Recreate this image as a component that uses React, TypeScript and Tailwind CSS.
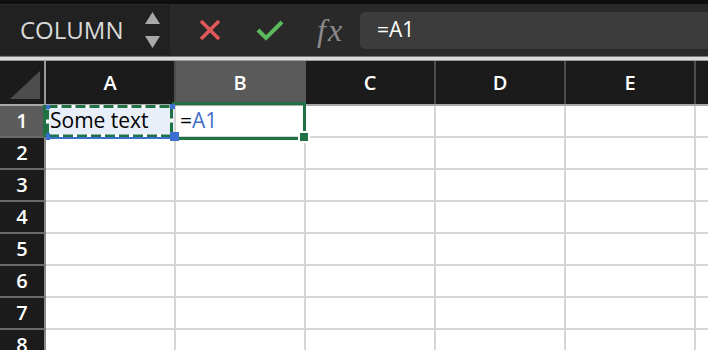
import React from 'react';

const COLS = ['A', 'B', 'C', 'D', 'E', 'F'];
const ROWS = [1, 2, 3, 4, 5, 6, 7, 8];

export default function App() {
  return (
    <div className="relative h-[350px] w-[708px] overflow-hidden bg-white font-['Open_Sans','Liberation_Sans',sans-serif]">
      <div className="h-[4px] bg-[#0e0e0e]" />
      {/* Toolbar */}
      <div className="flex h-[52px] items-center bg-[#292929]">
        <div className="flex h-[50px] w-[170px] shrink-0 items-center bg-[#212121] pl-[20px]">
          <span className="w-[125px] text-[24px] leading-none text-[#d9d9d9]">COLUMN</span>
          <div className="flex flex-col gap-[12px]">
            <svg width="15" height="12" viewBox="0 0 15 12">
              <polygon points="7.5,0 15,12 0,12" fill="#a9a9a9" />
            </svg>
            <svg width="15" height="12" viewBox="0 0 15 12">
              <polygon points="0,0 15,0 7.5,12" fill="#a9a9a9" />
            </svg>
          </div>
        </div>
        <div className="flex w-[80px] shrink-0 justify-center">
          <svg width="22" height="22" viewBox="0 0 22 22">
            <path d="M2 2 L20 20 M20 2 L2 20" stroke="#e15757" strokeWidth="3.6" />
          </svg>
        </div>
        <div className="flex w-[40px] shrink-0 justify-center">
          <svg width="28" height="22" viewBox="0 0 28 22">
            <path d="M2 11 L10 19 L26 3" stroke="#5cb85c" strokeWidth="4" fill="none" />
          </svg>
        </div>
        <div className="w-[70px] shrink-0 pl-[27px] font-['Liberation_Serif',serif] text-[32px] italic leading-none tracking-[2px] text-[#8a8a8a]">
          fx
        </div>
        <div className="flex h-[37px] flex-1 items-center rounded-l-[5px] bg-[#3c3c3c] pl-[17px] text-[21px] text-white">
          =A1
        </div>
      </div>
      {/* Separator */}
      <div className="h-[5px] border-t border-b border-t-[#7a7a7a] border-b-[#9a9a9a] bg-[#dcdcdc]" />
      {/* Column headers */}
      <div className="flex h-[43px] bg-[#1b1b1b]">
        <div className="relative w-[46px] shrink-0 border-r-2 border-[#9a9a9a]">
          <svg className="absolute left-[10px] top-[10px]" width="30" height="28" viewBox="0 0 30 28">
            <polygon points="30,0 30,28 0,28" fill="#4d4d4d" />
          </svg>
        </div>
        {COLS.map((c) => (
          <div
            key={c}
            className={
              c === 'B'
                ? 'flex w-[130px] shrink-0 items-center justify-center border-r-2 border-[#5a5a5a] bg-[#5a5a5a] text-[20px] font-semibold text-white'
                : 'flex w-[130px] shrink-0 items-center justify-center border-r-2 border-[#4d4d4d] text-[20px] font-semibold text-white'
            }
          >
            {c === 'F' ? null : c}
          </div>
        ))}
      </div>
      {/* Grid body */}
      <div className="relative border-t-2 border-[#a8a8a8]">
        {ROWS.map((r) => (
          <div key={r} className="flex">
            <div
              className={
                r === 1
                  ? 'flex h-[32px] w-[46px] shrink-0 items-center justify-center border-r-2 border-b-2 border-r-[#8a8a8a] border-b-[#6a6a6a] bg-[#5c5c5c] text-[20px] font-semibold text-white'
                  : 'flex h-[32px] w-[46px] shrink-0 items-center justify-center border-r-2 border-b-2 border-r-[#8a8a8a] border-b-[#6a6a6a] bg-[#1b1b1b] text-[20px] font-semibold text-white'
              }
            >
              {r}
            </div>
            {COLS.map((c) => (
              <div
                key={c}
                className={
                  r === 1 && c === 'A'
                    ? 'flex h-[32px] w-[130px] shrink-0 items-center border-r-2 border-b-2 border-[#d5d5d5] bg-[#e9eff9] pl-[4px] text-[21px] text-black'
                    : 'flex h-[32px] w-[130px] shrink-0 items-center border-r-2 border-b-2 border-[#d5d5d5] pl-[4px] text-[21px] text-black'
                }
              >
                {r === 1 && c === 'A' ? 'Some text' : null}
                {r === 1 && c === 'B' ? (
                  <span>
                    =<span className="text-[#3f70c8]">A1</span>
                  </span>
                ) : null}
              </div>
            ))}
          </div>
        ))}

        {/* Active row indicator */}
        <div className="absolute left-[43px] top-[-1px] h-[32px] w-[3px] bg-[#1f7244]" />
        {/* B1 active frame */}
        <div className="absolute left-[172px] top-[-4px] h-[38px] w-[134px] border-t-[3px] border-r-[3px] border-b-[3px] border-[#1f7244]" />
        {/* A1 marching ants */}
        <svg className="absolute left-[45px] top-[-2px]" width="130" height="36" viewBox="0 0 130 36">
          <rect x="2.5" y="2.5" width="124" height="29.5" fill="none" stroke="#ffffff" strokeWidth="3" />
          <rect x="2.5" y="2.5" width="124" height="29.5" fill="none" stroke="#1f7244" strokeWidth="3" strokeDasharray="10 4" />
        </svg>
        {/* Blue reference handles */}
        <div className="absolute left-[48px] top-[31px] h-[2px] w-[122px] bg-[#3a6fcf]" />
        <div className="absolute left-[46px] top-[-1px] h-[4px] w-[4px] bg-[#3a6fcf]" />
        <div className="absolute left-[46px] top-[27px] h-[7px] w-[4px] bg-[#3a6fcf]" />
        <div className="absolute left-[170px] top-[-2px] h-[5px] w-[5px] bg-[#3a6fcf]" />
        <div className="absolute left-[170px] top-[26px] h-[9px] w-[9px] bg-[#3a6fcf]" />
        {/* Fill handle */}
        <div className="absolute left-[298px] top-[25px] h-[12px] w-[12px] border-2 border-white bg-[#1f7244]" />
      </div>
    </div>
  );
}
